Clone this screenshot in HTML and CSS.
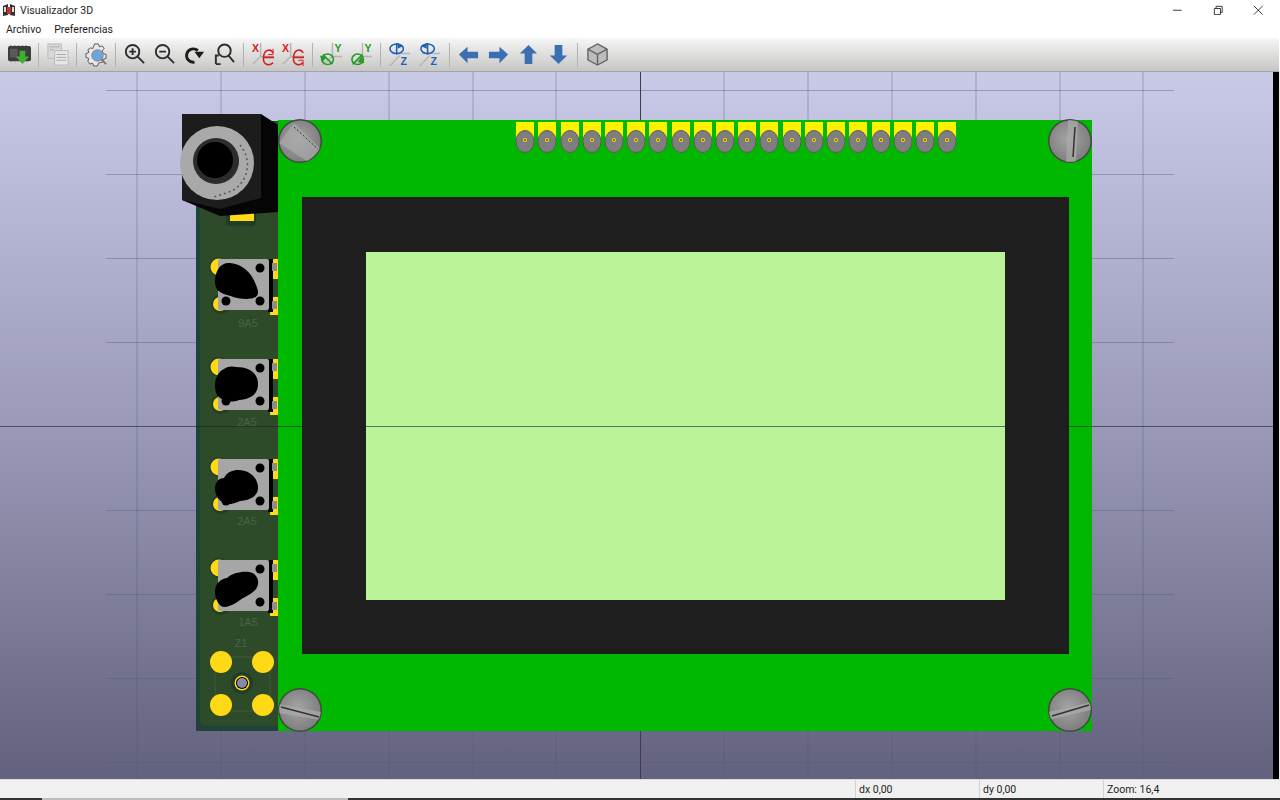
FILE: index.html
```html
<!DOCTYPE html>
<html>
<head>
    <meta charset="utf-8">
    <title>Visualizador 3D</title>
    <link rel="stylesheet" href="styles.css">
</head>
<body>
<div class="app">
    <div class="titlebar">
        <svg class="app-icon" viewBox="0 0 14 14">
            <path d="M1 3l5-2v11l-5 1z" fill="#333"/>
            <path d="M13 3L8 1v11l5 1z" fill="#333"/>
            <rect x="5" y="4" width="4" height="7" fill="#c8342c"/>
            <rect x="2" y="4" width="2" height="5" fill="#ddd"/>
            <rect x="10" y="4" width="2" height="5" fill="#ddd"/>
        </svg>
        <span class="title">Visualizador 3D</span>
        <div class="win-buttons">
            <svg class="win-btn" viewBox="0 0 12 12"><path d="M1 6h10" class="win-line"/></svg>
            <svg class="win-btn" viewBox="0 0 12 12"><path d="M1.500 4h7v7h-7zM3.500 4V1.500h7v7H8.500" class="win-line"/></svg>
            <svg class="win-btn" viewBox="0 0 12 12"><path d="M1 1l10 10M11 1L1 11" class="win-line"/></svg>
        </div>
    </div>
    <div class="menubar">
        <span class="menu-item">Archivo</span>
        <span class="menu-item">Preferencias</span>
    </div>
    <div class="toolbar">
        <div class="tool"><svg viewBox="0 0 24 24">
            <rect x="0" y="3" width="24" height="16" rx="2" fill="#3c3c3c"/>
            <path d="M3 3V2M7 3V2M11 3V2M15 3V2M19 3V2M3 19v1M7 19v1M19 19v1" stroke="#999" stroke-width="1.500"/>
            <rect x="2" y="6" width="8" height="9" fill="#5a5a5a"/>
            <path d="M12 8h6v6h4l-7 8-7-8h4z" fill="#3fae30"/>
        </svg></div>
        <div class="sep"></div>
        <div class="tool"><svg viewBox="0 0 24 24">
            <rect x="2" y="1" width="14" height="15" fill="#d8d8d8" stroke="#bbb"/>
            <rect x="9" y="8" width="14" height="15" fill="#e6e6e6" stroke="#bbb"/>
            <path d="M11 12h10M11 15h10M11 18h10M4 4h10M4 7h4" stroke="#aaa"/>
        </svg></div>
        <div class="sep"></div>
        <div class="tool"><svg viewBox="0 0 24 24">
            <path d="M10 1h4l1 3 3-1 2 3-2 2 1 3 3 1v4l-3 1-1 3-4 1-1 3h-4l-1-3-3 1-2-3 1-3-3-1v-4l3-1-1-3 3-2 2 1z" fill="#e8e8e8" stroke="#555"/>
            <circle cx="13" cy="13" r="6" fill="#6ea5d8" stroke="#8a8a8a"/>
            <path d="M17 17l5 5" stroke="#777" stroke-width="2"/>
        </svg></div>
        <div class="sep"></div>
        <div class="tool"><svg viewBox="0 0 24 24" class="ln-dark">
            <circle cx="10" cy="9" r="7"/><path d="M15 14l7 7M6.500 9h7M10 5.500v7"/>
        </svg></div>
        <div class="tool"><svg viewBox="0 0 24 24" class="ln-dark">
            <circle cx="10" cy="9" r="7"/><path d="M15 14l7 7M6.500 9h7"/>
        </svg></div>
        <div class="tool"><svg viewBox="0 0 24 24">
            <path d="M15.500 8A7 7 0 1 0 12 20" fill="none" stroke="#1c1c1c" stroke-width="3"/>
            <path d="M12 9h10l-5 7z" fill="#1c1c1c"/>
        </svg></div>
        <div class="tool"><svg viewBox="0 0 24 24" class="ln-dark">
            <circle cx="12" cy="8" r="6.500"/><path d="M16 13l6 7M3 22v-9h3M8 22H3"/>
        </svg></div>
        <div class="sep"></div>
        <div class="tool"><svg viewBox="0 0 24 24">
            <path d="M9 0v14L1 22M9 14h14" class="axis-ln"/>
            <text x="0" y="9" class="axis red">X</text>
            <path d="M22 10.500C20 6 13 6 12 14.500s6 10 10 6M11 15h12" class="rot red-ln"/>
            <path d="M22 6v6h-5" fill="none" stroke="#d42020"/>
        </svg></div>
        <div class="tool"><svg viewBox="0 0 24 24">
            <path d="M9 0v14L1 22M9 14h14" class="axis-ln"/>
            <text x="0" y="9" class="axis red">X</text>
            <path d="M22 10.500C20 6 13 6 12 14.500s6 10 10 6M11 15h12" class="rot red-ln"/>
            <path d="M22 24v-6h-5" fill="none" stroke="#d42020"/>
        </svg></div>
        <div class="sep"></div>
        <div class="tool"><svg viewBox="0 0 24 24">
            <path d="M13 0v14H23M13 14L2 23" class="axis-ln"/>
            <text x="15" y="9" class="axis green">Y</text>
            <ellipse cx="8" cy="17" rx="6" ry="5.500" class="rot green-ln"/><path d="M3 12l10 10" class="rot green-ln"/>
            <path d="M0 13l7 2-5 5z" fill="#229a22"/>
        </svg></div>
        <div class="tool"><svg viewBox="0 0 24 24">
            <path d="M13 0v14H23M13 14L2 23" class="axis-ln"/>
            <text x="15" y="9" class="axis green">Y</text>
            <ellipse cx="8" cy="17" rx="6" ry="5.500" class="rot green-ln"/><path d="M3 22l10-10" class="rot green-ln"/>
            <path d="M15 21l-7-1 4-6z" fill="#229a22"/>
        </svg></div>
        <div class="sep"></div>
        <div class="tool"><svg viewBox="0 0 24 24">
            <path d="M1 24L11 13M3 11h19" class="axis-ln"/>
            <text x="12" y="23" class="axis blue">Z</text>
            <ellipse cx="8" cy="6" rx="7" ry="5" class="rot blue-ln"/><path d="M8 0v12" class="rot blue-ln"/>
            <path d="M9 0l6 3-6 3z" fill="#1f5fb4"/>
        </svg></div>
        <div class="tool"><svg viewBox="0 0 24 24">
            <path d="M1 24L11 13M3 11h19" class="axis-ln"/>
            <text x="12" y="23" class="axis blue">Z</text>
            <ellipse cx="9" cy="6" rx="7" ry="5" class="rot blue-ln"/><path d="M9 0v12" class="rot blue-ln"/>
            <path d="M8 0L2 3l6 3z" fill="#1f5fb4"/>
        </svg></div>
        <div class="sep"></div>
        <div class="tool"><svg viewBox="0 0 24 24"><path d="M2 12l9-8v5h11v7H11v5z" class="arrow"/></svg></div>
        <div class="tool"><svg viewBox="0 0 24 24"><path d="M22 12l-9-8v5H2v7h11v5z" class="arrow"/></svg></div>
        <div class="tool"><svg viewBox="0 0 24 24"><path d="M12 2l-9 9h5v11h8V11h5z" class="arrow"/></svg></div>
        <div class="tool"><svg viewBox="0 0 24 24"><path d="M12 22l-9-9h5V2h8v11h5z" class="arrow"/></svg></div>
        <div class="sep"></div>
        <div class="tool"><svg viewBox="0 0 24 24">
            <path d="M12 1l10 5.500v11L12 23 2 17.500v-11z" fill="#bdbdbd" stroke="#666" stroke-width="1.500"/>
            <path d="M2 6.500L12 12l10-5.500M12 12v11" fill="none" stroke="#666" stroke-width="1.500"/>
        </svg></div>
    </div>

    <div class="viewport">
        <svg class="scene" viewBox="0 72 1273 707">
            <defs>
                <radialGradient id="screw-shade" cx="0.45" cy="0.45" r="0.6">
                    <stop offset="0" stop-color="#a4a4a4"/>
                    <stop offset="1" stop-color="#7c7c7c"/>
                </radialGradient>
                <g id="pin">
                    <rect x="-9" y="122" width="18" height="18" class="pin-pad"/>
                    <ellipse cx="0" cy="141.500" rx="9" ry="11" class="pin-ring"/>
                    <circle cx="0" cy="140" r="2" class="yellow"/>
                    <circle cx="0" cy="140" r="0.800" class="black"/>
                </g>
                <g id="switch">
                    <circle cx="219" cy="267" r="10" class="halo"/>
                    <circle cx="221" cy="304" r="10" class="halo"/>
                    <circle cx="219" cy="267" r="8.500" class="yellow"/>
                    <circle cx="220" cy="304" r="7" class="yellow"/>
                    <rect x="270" y="259" width="8" height="20" class="yellow"/>
                    <rect x="270" y="297" width="8" height="18" class="yellow"/>
                    <rect x="268" y="259" width="5" height="53" class="black"/>
                    <rect x="272" y="263" width="5" height="8" class="tab"/>
                    <rect x="272" y="301" width="5" height="8" class="tab"/>
                    <rect x="218" y="259" width="51" height="51" rx="2" class="sw-body"/>
                    <circle cx="260" cy="268" r="4.500" class="black"/>
                    <circle cx="226" cy="301" r="4.500" class="black"/>
                    <circle cx="260" cy="301" r="4.500" class="black"/>
                </g>
                <clipPath id="screw-clip"><circle r="21"/></clipPath>
                <g id="screw-base">
                    <circle r="22" class="screw-edge"/>
                    <circle r="20.500" class="screw-fill"/>
                </g>
            </defs>

            <path d="M137 72v707M221 72v707M305 72v707M389 72v707M473 72v707M556 72v707M724 72v707M808 72v707M892 72v707M976 72v707M1060 72v707M1143 72v707M106 90.500h1068M106 174.500h1068M106 258.500h1068M106 342.500h1068M106 510.500h1068M106 594.500h1068M106 678.500h1068M106 762.500h1068" class="grid"/>
            <path d="M640.500 72v707" class="grid-axis"/>

            <!-- daughter board on the left -->
            <rect x="196" y="121" width="84" height="610" class="pcb-edge"/>
            <rect x="200" y="121" width="80" height="605" rx="5" class="pcb"/>
            <rect x="226" y="205" width="30" height="21" rx="4" class="halo"/>
            <rect x="230" y="212" width="24" height="9" class="yellow"/>

            <use href="#switch"/>
            <path d="M215 282c0-12 6-20 15-19 14 1 24 12 28 28 1 7-6 8-12 8-8 0-15-3-19-4-7-2-12-5-12-13z" class="black"/>
            <text x="248" y="327" class="silk">9A5</text>

            <use href="#switch" y="100"/>
            <path d="M215 386c0-9 4-15 9-17 3-3 9-3 12-2 13 0 22 6 22 17 0 10-7 15-19 16-5 2-11 2-14 0-6-1-10-6-10-14z" class="black"/>
            <text x="247" y="426" class="silk">2A5</text>

            <use href="#switch" y="200"/>
            <path d="M215 489c0-8 5-11 9-11 3-6 9-8 14-8 12 0 20 8 20 18 0 8-8 12-18 13-5 2-10 4-14 3-6-2-11-8-11-15z" class="black"/>
            <text x="247" y="525" class="silk">2A5</text>

            <use href="#switch" y="301"/>
            <path d="M215 592c0-8 5-13 12-14 5-5 15-7 22-6 7 1 10 7 9 12-1 8-10 11-18 16-5 4-11 7-17 7-5-2-8-9-8-15z" class="black"/>
            <text x="248" y="626" class="silk">1A5</text>
            <text x="241" y="647" class="silk">Z1</text>

            <path d="M215 657h55v54h-55z" class="silk-line"/>
            <circle cx="221" cy="662" r="11" class="yellow"/>
            <circle cx="263" cy="662" r="11" class="yellow"/>
            <circle cx="221" cy="705" r="11" class="yellow"/>
            <circle cx="263" cy="705" r="11" class="yellow"/>
            <circle cx="242" cy="683" r="11" class="halo"/>
            <circle cx="242" cy="683" r="7.500" class="yellow"/>
            <circle cx="242" cy="683" r="6" class="black"/>
            <circle cx="242" cy="683" r="5" class="via"/>

            <!-- display board -->
            <rect x="278" y="120" width="814" height="611" class="board"/>
            <rect x="302" y="197" width="767" height="457" class="lcd-frame"/>
            <rect x="366" y="252" width="639" height="348" class="lcd"/>

            <use href="#pin" x="525"/><use href="#pin" x="547"/><use href="#pin" x="570"/><use href="#pin" x="592"/>
            <use href="#pin" x="614"/><use href="#pin" x="636"/><use href="#pin" x="658"/><use href="#pin" x="681"/>
            <use href="#pin" x="703"/><use href="#pin" x="725"/><use href="#pin" x="747"/><use href="#pin" x="769"/>
            <use href="#pin" x="792"/><use href="#pin" x="814"/><use href="#pin" x="836"/><use href="#pin" x="858"/>
            <use href="#pin" x="881"/><use href="#pin" x="903"/><use href="#pin" x="925"/><use href="#pin" x="947"/>

            <!-- screws -->
            <g transform="translate(300 141)">
                <use href="#screw-base"/>
                <path d="M-21 2L-6-18 21 8 8 21z" class="screw-light" clip-path="url(#screw-clip)"/>
                <path d="M-6-14L18 8" class="screw-slot"/>
            </g>
            <g transform="translate(1070 141)">
                <use href="#screw-base"/>
                <path d="M-2-21h10L6 21H-4z" class="screw-light" clip-path="url(#screw-clip)"/>
                <path d="M5-14L3 16" class="screw-slot solid"/>
            </g>
            <g transform="translate(300 710)">
                <use href="#screw-base"/>
                <path d="M-21-6L21 2v8L-21 3z" class="screw-light" clip-path="url(#screw-clip)"/>
                <path d="M-19-3L19 7" class="screw-slot solid"/>
            </g>
            <g transform="translate(1070 710)">
                <use href="#screw-base"/>
                <path d="M-21 2L21-8v8L-21 10z" class="screw-light" clip-path="url(#screw-clip)"/>
                <path d="M-18 6L19-5" class="screw-slot solid"/>
            </g>

            <!-- audio jack -->
            <path d="M261 114l17 11v87l-58 4-38-16z" class="jack-side"/>
            <path d="M182 114h79v84l-41 11-38-9z" class="jack-front"/>
            <circle cx="217" cy="163" r="37" class="jack-ring"/>
            <path d="M240 145a30 30 0 0 1-8 46l-18 6" class="jack-speckle"/>
            <circle cx="216" cy="161" r="23" class="jack-inner"/>
            <circle cx="215" cy="160" r="18" class="black"/>

            <path d="M0 426.500h1273" class="axis-h"/>
        </svg>
        <div class="scene-edge"></div>
    </div>

    <div class="statusbar">
        <div class="status-fill"></div>
        <div class="status-cell">dx 0,00</div>
        <div class="status-cell">dy 0,00</div>
        <div class="status-cell zoom-cell">Zoom: 16,4</div>
    </div>
    <div class="taskline">
        <div class="task-gap"></div>
    </div>
</div>
</body>
</html>
```

FILE: styles.css
```css
body {
    margin: 0;
    font-family: Roboto, "Noto Sans", sans-serif;
    color: #1e1e1e;
    background-color: #fff;
    overflow: hidden;
}
.app {
    display: flex;
    flex-direction: column;
    width: 1280px;
    height: 800px;
}

/* window chrome */
.titlebar {
    display: flex;
    align-items: center;
    height: 20px;
    padding-left: 2px;
    font-size: 10.5px;
}
.app-icon {
    width: 14px;
    height: 14px;
    margin-right: 4px;
}
.win-buttons {
    display: flex;
    gap: 30px;
    margin-left: auto;
    margin-right: 16.5px;
}
.win-btn {
    width: 10.5px;
    height: 10.5px;
}
.win-line {
    fill: none;
    stroke: #222;
    stroke-width: 1;
}
.menubar {
    display: flex;
    gap: 13px;
    height: 18px;
    padding-left: 6px;
    align-items: center;
    font-size: 10.5px;
}

/* toolbar */
.toolbar {
    display: flex;
    align-items: center;
    height: 34px;
    padding-left: 4px;
    margin-right: 1px;
    box-sizing: border-box;
    background: linear-gradient(#f6f6f6, #c6c6c4);
    border-bottom: 1px solid #a4a4a4;
}
.tool {
    display: flex;
    justify-content: center;
    width: 30px;
}
.tool svg {
    width: 23px;
    height: 23px;
    overflow: visible;
}
.sep {
    width: 1px;
    height: 24px;
    margin: 0 4px 0 3.5px;
    background-color: #b2b2b2;
}
.ln-dark {
    fill: none;
    stroke: #2e2e2e;
    stroke-width: 2;
}
.axis {
    font-family: "Liberation Sans", sans-serif;
    font-size: 11px;
    font-weight: bold;
}
.axis-ln {
    fill: none;
    stroke: #b5b5b5;
    stroke-width: 1.5;
}
.red { fill: #d42020; }
.green { fill: #229a22; }
.blue { fill: #1f5fb4; }
.rot {
    fill: none;
    stroke-width: 1.6;
}
.red-ln { stroke: #d42020; }
.green-ln { stroke: #229a22; }
.blue-ln { stroke: #1f5fb4; }
.arrow {
    fill: #3a70b2;
}

/* 3d view */
.viewport {
    flex: 1;
    display: flex;
    min-height: 0;
    background: linear-gradient(#c9c9e8, #9a9ab8 50%, #62627e);
}
.scene {
    display: block;
    width: 1273px;
    height: 100%;
}
.scene-edge {
    width: 6px;
    background-color: #000;
}
.viewport::after {
    content: "";
    width: 1px;
    background-color: #f0f0f0;
}
.grid {
    fill: none;
    stroke: #55557a;
    stroke-opacity: 0.4;
}
.grid-axis {
    stroke: #3c3c4c;
}
.axis-h {
    stroke: #1c1c2c;
    stroke-opacity: 0.6;
}
.pcb-edge { fill: #1f4239; }
.pcb { fill: #2d4b29; }
.halo { fill: #223d26; }
.yellow { fill: #ffd916; }
.black { fill: #000; }
.tab { fill: #8c8c8c; }
.sw-body { fill: #a6a6a6; }
.via { fill: #8888a8; }
.silk {
    font-family: "Liberation Sans", sans-serif;
    font-size: 11px;
    text-anchor: middle;
    fill: #496345;
}
.silk-line {
    fill: none;
    stroke: #3e5b3a;
}
.board { fill: #00b800; }
.lcd-frame { fill: #1e1e1e; }
.lcd { fill: #b9f297; }
.pin-pad { fill: #fff200; }
.pin-ring {
    fill: #7e7e7e;
    stroke: #5c5c5c;
}
.screw-edge { fill: #3e4a3e; }
.screw-fill { fill: url(#screw-shade); }
.screw-light { fill: #ababab; fill-opacity: 0.7; }
.screw-slot {
    fill: none;
    stroke: #333;
    stroke-dasharray: 2 2;
}
.screw-slot.solid {
    stroke-dasharray: none;
    stroke-width: 1.5;
}
.jack-front { fill: #1c1c1c; }
.jack-side { fill: #050505; }
.jack-ring { fill: #a9a9a9; }
.jack-speckle {
    fill: none;
    stroke: #555;
    stroke-width: 1.5;
    stroke-dasharray: 2 3;
}
.jack-inner { fill: #2c2c2c; }

/* status bar */
.statusbar {
    display: flex;
    height: 19px;
    font-size: 10.5px;
    background-color: #f0f0f0;
    border-top: 1px solid #dcdcdc;
    box-sizing: border-box;
}
.status-fill {
    width: 855px;
}
.status-cell {
    width: 120px;
    padding-left: 3px;
    line-height: 19px;
    border-left: 1px solid #d2d2d2;
}
.zoom-cell {
    flex: 1;
}
.taskline {
    display: flex;
    height: 2px;
    background-color: #333;
}
.task-gap {
    width: 306px;
    margin-left: 42px;
    background-color: #bdbdbd;
}
```
